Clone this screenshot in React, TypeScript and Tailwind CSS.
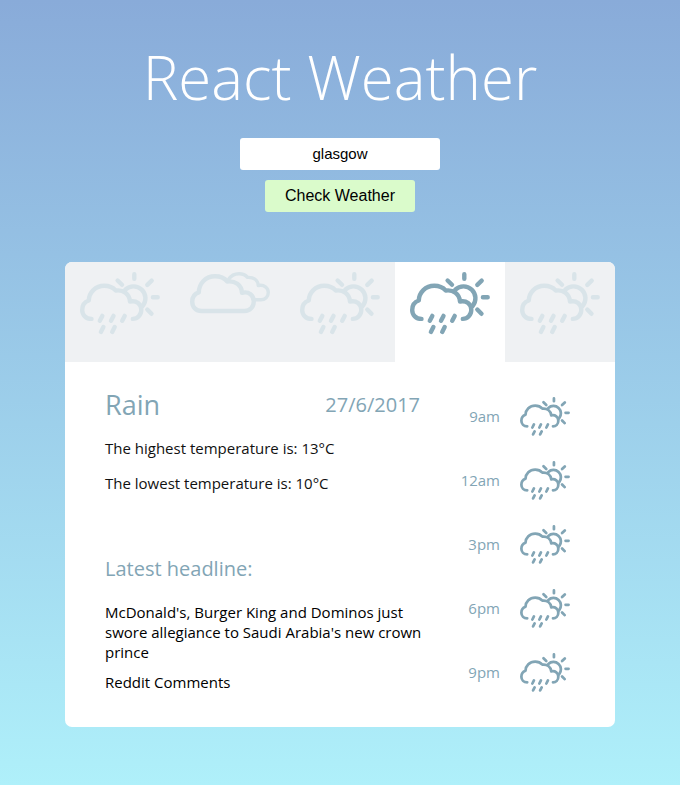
import React from "react";

const family = "font-['Open_Sans',sans-serif]";

function RainIcon({ className }: { className: string }) {
  return (
    <svg viewBox="0 0 80 64" className={className} fill="none" stroke="currentColor" strokeWidth="4.4" strokeLinecap="round" strokeLinejoin="round">
      <path d="M11.5 46.900C6 46.900 2.200 43 2.200 38C2.200 33.500 4.800 29.800 8.800 28.500C9 20.500 15.500 13.800 24.300 13.800C29 13.800 33 15.500 35.800 18.600C43 17.500 49.500 22 50 29.500C56.500 28 61.300 32.300 61.300 37.800C61.300 43 57.500 46.900 52.800 46.900" />
      <path d="M45.300 17.700A11.900 11.900 0 0 1 62.600 34" />
      <path d="M54.300 2.200V6.700M37.600 8.500L42 12.800M67.300 12.900L71.700 8.700M72.900 25.300H77.700M67.300 37.500L71.500 41.800" />
      <path d="M22.300 43.900L19.800 48.800M33.500 43.900L31 48.800M44.700 43.900L42.200 48.800M23.400 55L20.900 59.900M34.700 55L32.200 59.900" />
    </svg>
  );
}

function CloudIcon({ className }: { className: string }) {
  return (
    <svg viewBox="0 0 80 64" className={className} fill="none" stroke="currentColor" strokeWidth="4.400" strokeLinecap="round" strokeLinejoin="round">
      <path d="M11.500 39C6 39 2.200 35 2.200 29.800C2.200 25.200 4.800 21.700 8.800 20.400C9 11.500 15.500 4.300 25 4.300C30 4.300 34.500 6.200 37.300 9.500C45 8.500 51.500 13 52 20.800C59 19 63.800 23.700 63.800 29.600C63.800 35 60 39 54.500 39Z" />
      <path strokeWidth="3.400" d="M38.500 7.500C41 3.800 44.500 1.800 49 1.800C52.500 1.800 55.500 3 57.500 5.400C63.500 5 68 8 68.300 13.600C74 12.300 78.300 15.800 78.300 20.500C78.300 24.700 75 27.800 71 27.800H65" />
    </svg>
  );
}

const hours = ["9am", "12am", "3pm", "6pm", "9pm"];

export default function App() {
  return (
    <main className={`${family} h-[785px] bg-linear-to-b from-[#89abd9] to-[#aff0fa] pt-[35px] text-[15px] text-black`}>
      <h1 className="h-[103px] text-center text-[60px] leading-[84px] font-light text-white">React Weather</h1>
      <form className="flex flex-col items-center gap-[10px] font-['Liberation_Sans',sans-serif]">
        <input defaultValue="glasgow" className="h-8 w-[200px] rounded-[3px] bg-white pb-[2px] text-center text-[15px]" />
        <button type="button" className="h-8 w-[150px] rounded-[3px] bg-[#dafbcb] text-base">Check Weather</button>
      </form>
      <section className="mx-auto mt-[50px] h-[465px] w-[550px] overflow-hidden rounded-[7px] bg-white">
        <nav className="grid grid-cols-5">
          {[0, 1, 2, 3, 4].map((day) => (
            <div key={day} className={`flex h-[100px] justify-center pt-[10px] ${day === 3 ? "bg-white text-[#82a5b5]" : "bg-[#eff1f3] text-[#d9e4e9]"}`}>
              {day === 1 ? <CloudIcon className="h-16 w-20" /> : <RainIcon className="h-16 w-20" />}
            </div>
          ))}
        </nav>
        <div className="flex">
          <div className="ml-10 w-[325px] shrink-0 pt-6">
            <div className="flex h-[38px] w-[315px] items-center justify-between text-[#82a5b5]">
              <h2 className="text-[27px] leading-[38px]">Rain</h2>
              <time className="text-xl">27/6/2017</time>
            </div>
            <p className="mt-[14px] leading-5 text-[#111]">The highest temperature is: 13°C</p>
            <p className="mt-[15px] leading-5 text-[#111]">The lowest temperature is: 10°C</p>
            <h3 className="mt-[62px] text-xl leading-7 text-[#82a5b5]">Latest headline:</h3>
            <p className="mt-[19px] leading-5">McDonald's, Burger King and Dominos just swore allegiance to Saudi Arabia's new crown prince</p>
            <p className="mt-[10px] leading-5">Reddit Comments</p>
          </div>
          <ul className="w-[140px] pt-[34px] text-[#82a5b5]">
            {hours.map((hour) => (
              <li key={hour} className="flex h-16 items-start justify-end gap-5">
                <span className="pt-[10px] leading-5">{hour}</span>
                <RainIcon className="mt-[0.7px] h-10 w-[50px]" />
              </li>
            ))}
          </ul>
        </div>
      </section>
    </main>
  );
}
